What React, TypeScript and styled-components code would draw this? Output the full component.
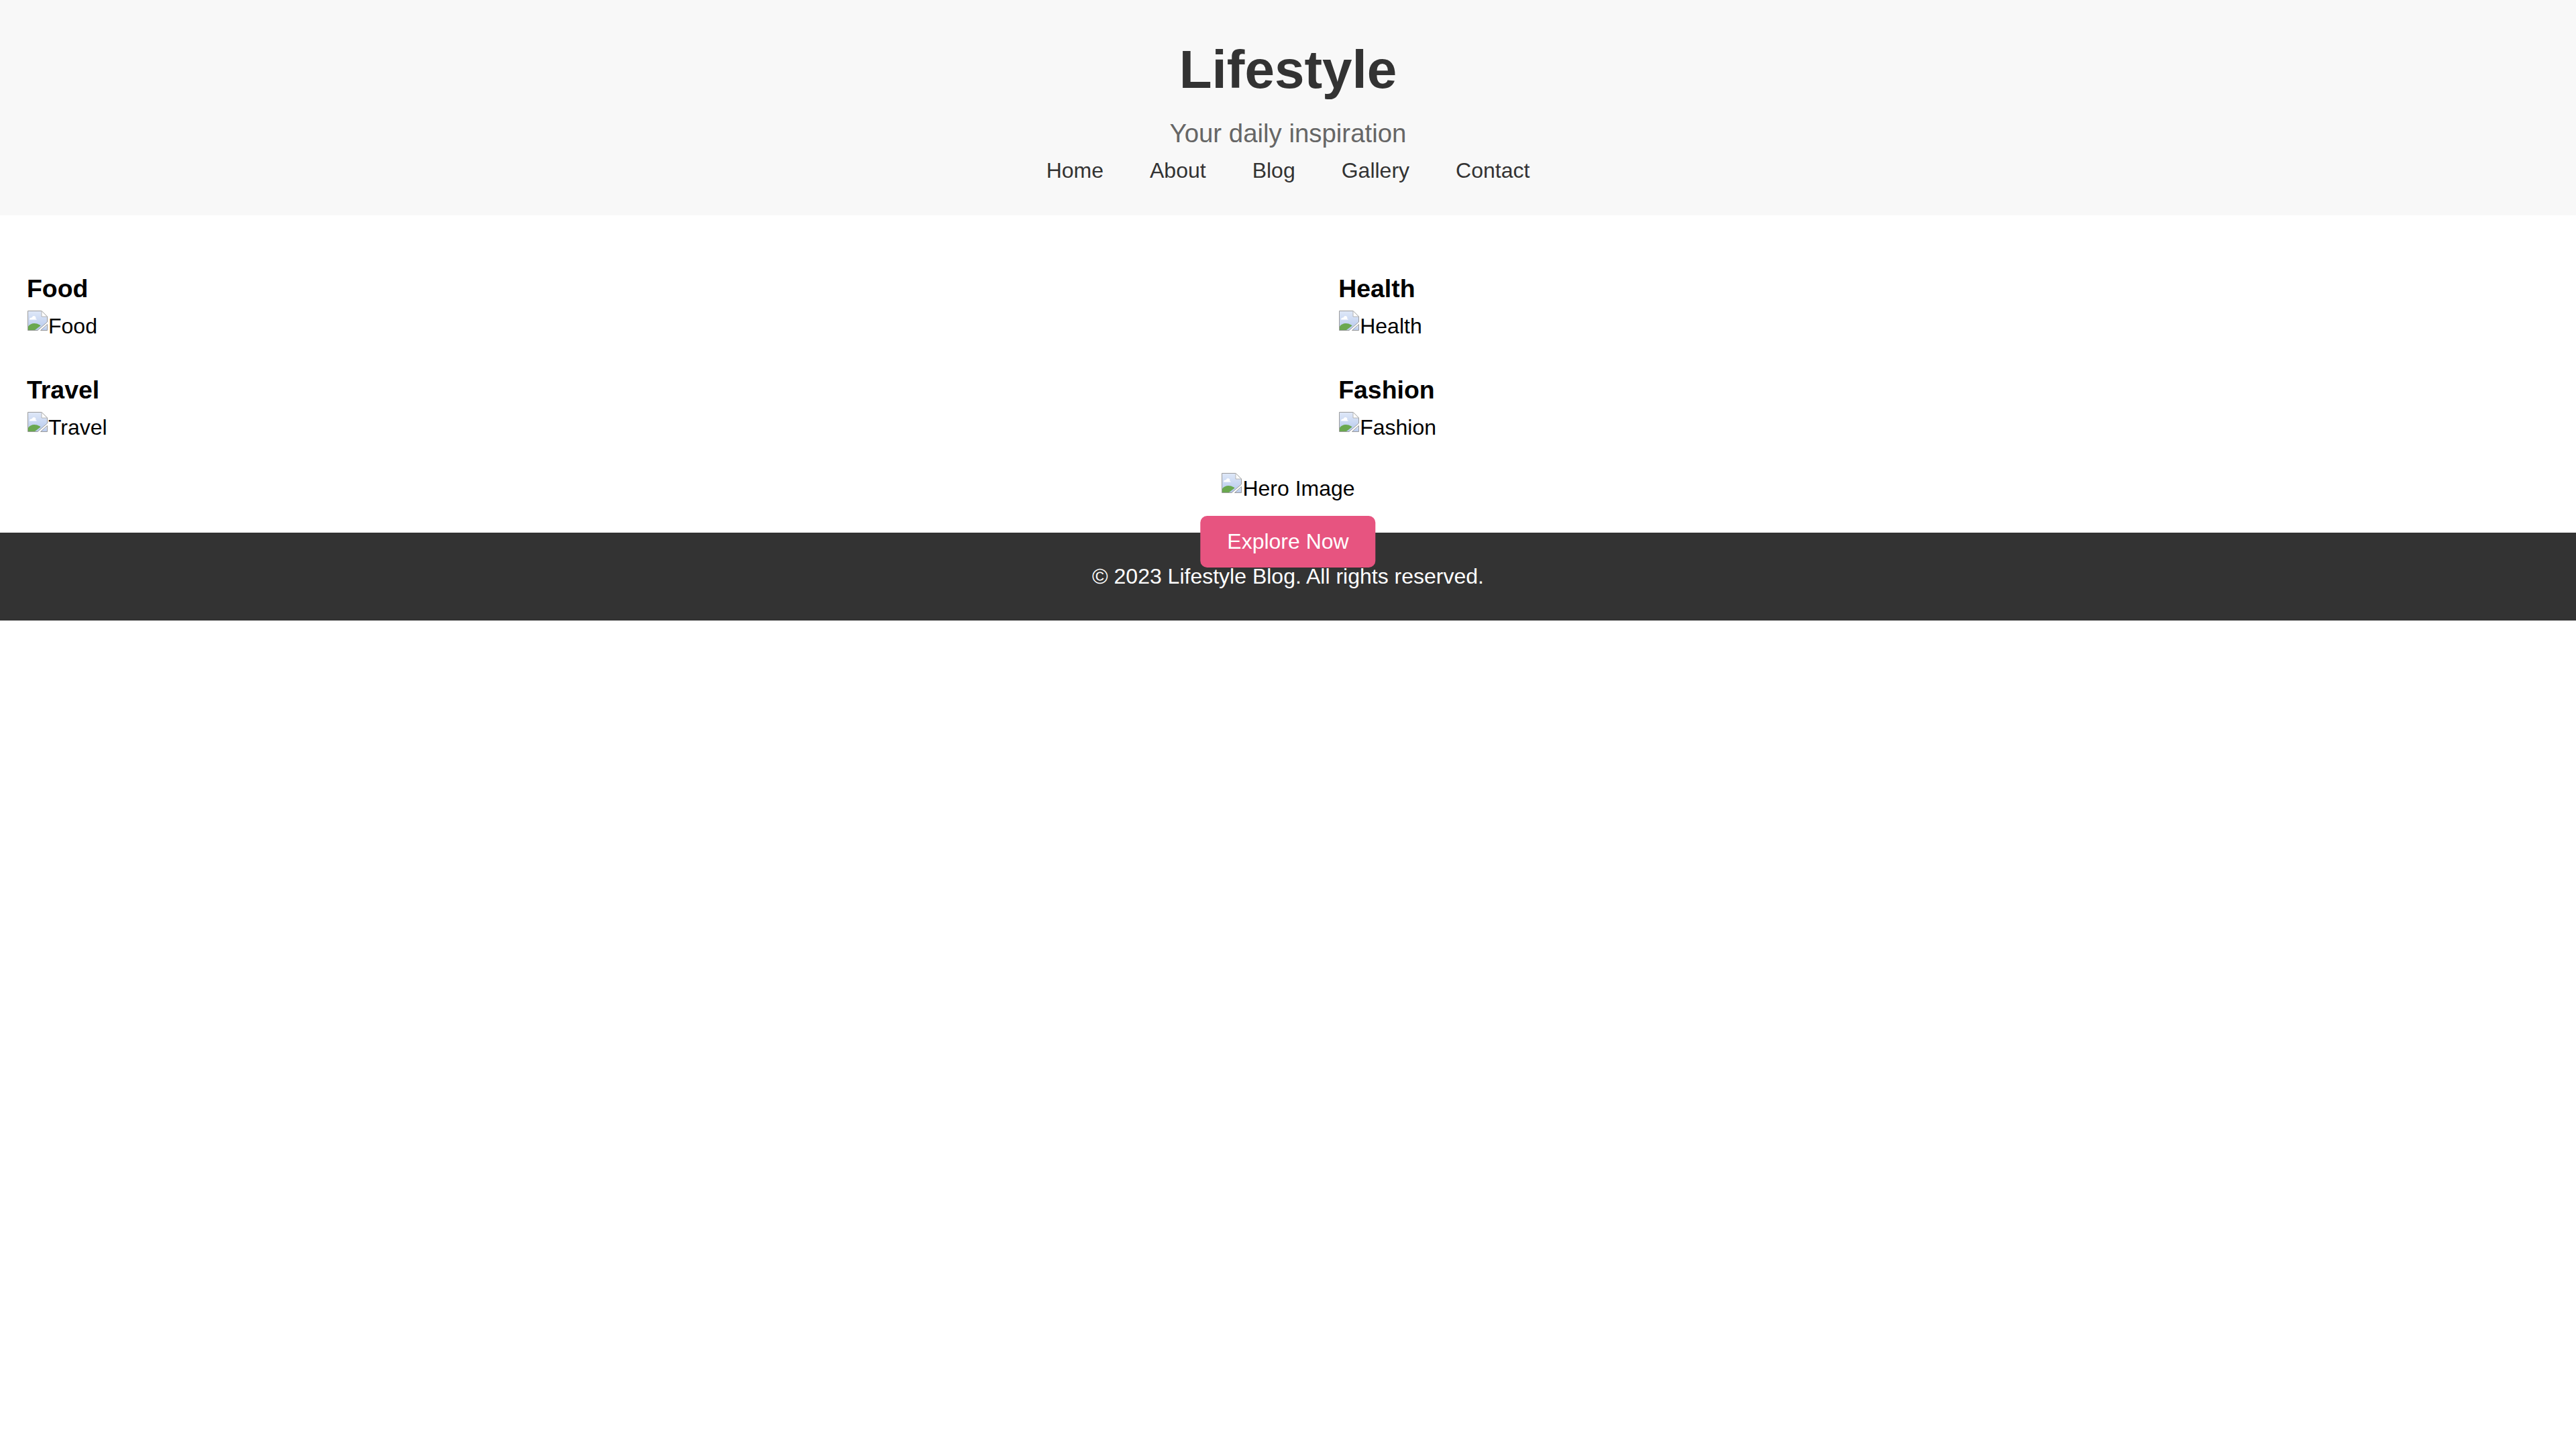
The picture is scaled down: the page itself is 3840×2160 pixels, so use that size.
import React, { useId } from "react";
import styled, { createGlobalStyle } from "styled-components";

const GlobalStyle = createGlobalStyle`
  * { box-sizing: border-box; }
  html, body {
    margin: 0;
    padding: 0;
    background: #ffffff;
  }
  body {
    font-family: "Liberation Sans", Arial, Helvetica, sans-serif;
    font-size: 32px;
    line-height: 1.6;
    color: #000000;
  }
`;

const Header = styled.header`
  background: #f8f8f8;
  padding: 40px;
  text-align: center;
`;

const Title = styled.h1`
  margin: 0;
  font-size: 80px;
  line-height: 128px;
  font-weight: bold;
  color: #333333;
`;

const Tagline = styled.p`
  margin: 0;
  font-size: 38.4px;
  line-height: 61.44px;
  color: #666666;
`;

const Nav = styled.nav`
  display: flex;
  justify-content: center;
  gap: 69px;
  line-height: 51.2px;
`;

const NavLink = styled.a`
  font-size: 32px;
  color: #333333;
  text-decoration: none;
`;

const Main = styled.main`
  padding: 40px;
`;

const Categories = styled.section`
  display: flex;
  flex-wrap: wrap;
  justify-content: space-between;
  margin-top: 40px;
`;

const Category = styled.article`
  width: 48%;
  margin-bottom: 40px;
`;

const CategoryTitle = styled.h3`
  margin: 0;
  font-size: 37.44px;
  line-height: 59.9px;
  font-weight: bold;
  color: #000000;
`;

const ImageLine = styled.div`
  line-height: 51.2px;
  font-size: 32px;
`;

const BrokenWrap = styled.span`
  display: inline-block;
  white-space: nowrap;
  color: #000000;
`;

const BrokenIcon = styled.svg`
  width: 32px;
  height: 32px;
  vertical-align: top;
  margin-top: 1px;
`;

const Hero = styled.section`
  position: relative;
  text-align: center;
  line-height: 51.2px;
`;

const HeroOverlay = styled.div`
  position: absolute;
  top: 66px;
  left: 50%;
  transform: translateX(-50%);
`;

const ExploreButton = styled.button`
  display: block;
  background: #e75480;
  color: #ffffff;
  border: none;
  border-radius: 10px;
  padding: 20px 40px;
  font-family: "Liberation Sans", Arial, Helvetica, sans-serif;
  font-size: 32px;
  line-height: normal;
  white-space: nowrap;
  cursor: pointer;
`;

const Footer = styled.footer`
  background: #333333;
  color: #ffffff;
  text-align: center;
  padding: 40px;
  font-size: 32px;
  line-height: 51.2px;
`;

function BrokenImage({ alt }: { alt: string }) {
  const id = useId().replace(/:/g, "");
  return (
    <BrokenWrap role="img" aria-label={alt}>
      <BrokenIcon viewBox="0 0 32 32" aria-hidden="true">
        <defs>
          <linearGradient id={`g${id}`} x1="0" y1="0" x2="0" y2="1">
            <stop offset="0" stopColor="#dfe8f8" />
            <stop offset="1" stopColor="#b5c8ec" />
          </linearGradient>
        </defs>
        <path
          d="M1.5 1.5 H22 L30.5 10 V18 L16 30.5 H1.5 Z"
          fill={`url(#g${id})`}
          stroke="#9c9c9c"
          strokeWidth="1"
        />
        <path d="M22 1.5 V10 H30.5 Z" fill="#ffffff" stroke="#b4b4b4" strokeWidth="1" strokeLinejoin="round" />
        <path
          d="M4 14.5 C4 12 5.8 11 7.6 11.6 C8.2 9 10.6 8.4 12.2 9.6 C13.6 10.6 13.6 12.4 13 13 C14.6 13.2 15 14.5 14.6 14.5 Z"
          fill="#ffffff"
        />
        <path d="M2 30 V24.5 C6 19.5 12.5 18.5 19.5 22.5 L20.5 23.5 L12 30 Z" fill="#6aa84f" />
        <path d="M20.5 30.5 L30.5 21.5 V30.5 Z" fill={`url(#g${id})`} stroke="#9c9c9c" strokeWidth="1" />
      </BrokenIcon>
      {alt}
    </BrokenWrap>
  );
}

const categories = ["Food", "Health", "Travel", "Fashion"];
const links = ["Home", "About", "Blog", "Gallery", "Contact"];

export default function App() {
  return (
    <>
      <GlobalStyle />
      <Header>
        <Title>Lifestyle</Title>
        <Tagline>Your daily inspiration</Tagline>
        <Nav>
          {links.map((l) => (
            <NavLink key={l} href="#">
              {l}
            </NavLink>
          ))}
        </Nav>
      </Header>
      <Main>
        <Categories>
          {categories.map((c) => (
            <Category key={c}>
              <CategoryTitle>{c}</CategoryTitle>
              <ImageLine>
                <BrokenImage alt={c} />
              </ImageLine>
            </Category>
          ))}
        </Categories>
        <Hero>
          <BrokenImage alt="Hero Image" />
          <HeroOverlay>
            <ExploreButton>Explore Now</ExploreButton>
          </HeroOverlay>
        </Hero>
      </Main>
      <Footer>© 2023 Lifestyle Blog. All rights reserved.</Footer>
    </>
  );
}
